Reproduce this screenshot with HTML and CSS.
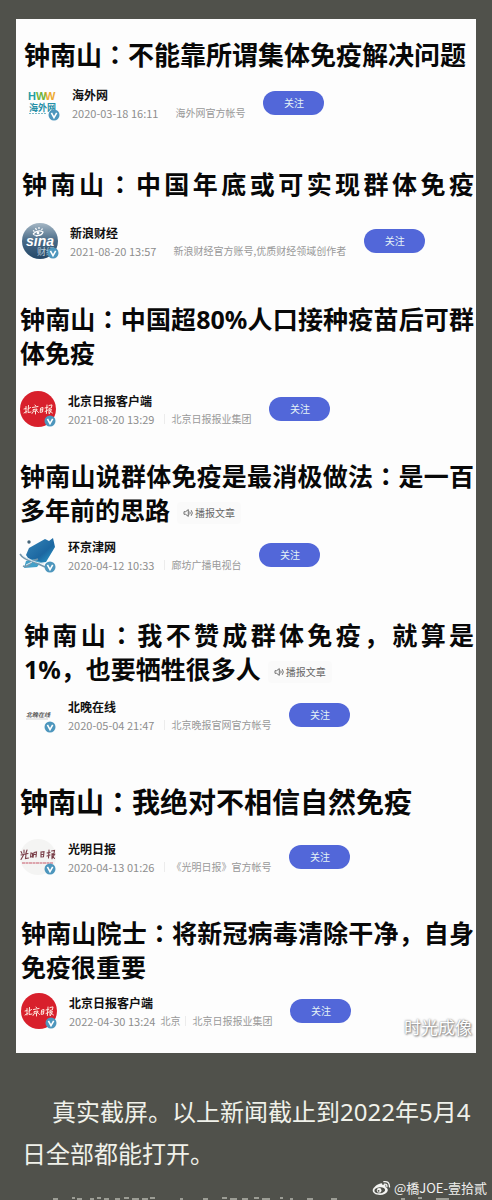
FILE: index.html
```html
<!DOCTYPE html>
<html lang="zh-CN">
<head>
<meta charset="utf-8">
<meta name="viewport" content="width=device-width, initial-scale=1">
<title>钟南山新闻</title>
<link rel="stylesheet" href="styles.css">
</head>
<body>
<svg width="0" height="0" class="defs" aria-hidden="true">
  <symbol id="verified" viewBox="0 0 12 12">
    <circle cx="6" cy="6" r="5.5" fill="#4d96bd"/>
    <path d="M3.4 3.8 6 8.6 8.7 3.8" fill="none" stroke="#fff" stroke-width="1.6"/>
  </symbol>
  <symbol id="speaker" viewBox="0 0 11 10">
    <path d="M1 3.7h1.6L5.3 1.6v6.8L2.6 6.3H1zM6.7 3.6q1 1.4 0 2.8M8.2 2.2q2.2 2.8 0 5.6" fill="none" stroke="#707070" stroke-width="1"/>
  </symbol>
  <symbol id="beijing" viewBox="0 0 36 36">
    <circle cx="18" cy="18" r="18" fill="#d8202c"/>
    <g fill="none" stroke="#ffe9df" stroke-width="1" stroke-linecap="round">
      <path d="M6 15.500v6.500M4 18l2-.5M4 22l2.500-1.500M8.500 14.500 8 21.500l3-.5M8 18l2.500-1.500"/>
      <path d="M15 14l.8 1M12.500 16.500l5.500-1M13.500 18.500l3.500-.5-.5 2-3 .3zM15.500 20v3M13 21l-1 1.500M17.500 20.500l1 1"/>
      <path d="M21 17l2-.5-.5 4.500-2 .3zM21 19l1.500-.3"/>
      <path d="M27 14l-.6 8.500M25 17l3-.8M25 20.500l3-1.500M29 14.500l3-.6-.6 3-2.400.5v5M29.500 19l2-.5-2 4M29.500 19.500l3 2.500"/>
    </g>
  </symbol>
</svg>
<main class="post">
  <div class="paper">
    <article class="news news--1">
      <h2 class="title title--26">钟南山<span class="colon" lang="zh-TW">：</span>不能靠所谓集体免疫解决问题</h2>
      <div class="byline">
        <svg class="avatar" viewBox="0 0 36 36" role="img" aria-label="海外网">
          <g class="logo-latin"><text x="4" y="15" fill="#269da4">H</text><text x="12" y="15" fill="#70b23d">W</text><text x="21" y="15" fill="#edaa32">W</text></g>
          <text class="logo-cn" x="5" y="26" fill="#278fa7">海外网</text>
          <path d="M5 28.500h18" stroke="#7abac8" stroke-width="1" stroke-dasharray="2 1"/>
          <use href="#verified" x="24" y="24" width="12" height="12"/>
        </svg>
        <div class="info"><strong class="name">海外网</strong><div class="meta"><time>2020-03-18 16:11</time><span class="source">海外网官方帐号</span></div></div>
        <button class="follow" type="button">关注</button>
      </div>
    </article>

    <article class="news news--2">
      <h2 class="title title--spread">钟南山<span class="colon" lang="zh-TW">：</span>中国年底或可实现群体免疫</h2>
      <div class="byline">
        <svg class="avatar" viewBox="0 0 36 36" role="img" aria-label="新浪财经">
          <defs><linearGradient id="sky" x1="0" y1="0" x2="0" y2="1"><stop offset="0" stop-color="#a5b7c5"/><stop offset=".5" stop-color="#476986"/><stop offset="1" stop-color="#244767"/></linearGradient></defs>
          <circle cx="18" cy="18" r="18" fill="url(#sky)"/>
          <path d="M11 11q5-5 10-2-1 3.500-5.500 3.500-3.500 0-4.500-1.500M11 7.500l1.500 1M13.500 5l1 2M17 4v2M20.500 5.500l-1 1.500" fill="none" stroke="#fff" stroke-width="1.200"/>
          <circle cx="16" cy="10" r="1.400" fill="#fff"/>
          <text class="logo-sina" x="4" y="23">sina</text>
          <text class="logo-small" x="15" y="32">财经</text>
          <use href="#verified" x="25" y="24" width="12" height="12"/>
        </svg>
        <div class="info"><strong class="name">新浪财经</strong><div class="meta"><time>2021-08-20 13:57</time><span class="source">新浪财经官方账号,优质财经领域创作者</span></div></div>
        <button class="follow" type="button">关注</button>
      </div>
    </article>

    <article class="news news--3">
      <h2 class="title">钟南山<span class="colon" lang="zh-TW">：</span>中国超80%人口接种疫苗后可群体免疫</h2>
      <div class="byline">
        <svg class="avatar" viewBox="0 0 36 36" role="img" aria-label="北京日报"><use href="#beijing"/><use href="#verified" x="24" y="24" width="12" height="12"/></svg>
        <div class="info"><strong class="name">北京日报客户端</strong><div class="meta"><time>2021-08-20 13:29</time><span class="source source--ruled">北京日报报业集团</span></div></div>
        <button class="follow" type="button">关注</button>
      </div>
    </article>

    <article class="news news--4">
      <h2 class="title">钟南山说群体免疫是最消极做法<span class="colon" lang="zh-TW">：</span>是一百多年前的思路<button class="listen" type="button"><svg class="speaker" aria-hidden="true"><use href="#speaker"/></svg>播报文章</button></h2>
      <div class="byline">
        <svg class="avatar" viewBox="0 0 36 36" role="img" aria-label="环京津网">
          <defs><linearGradient id="book" x1="0" y1="0" x2="1" y2="1"><stop offset="0" stop-color="#3687b9"/><stop offset=".6" stop-color="#1c67a1"/><stop offset="1" stop-color="#2fa4d0"/></linearGradient></defs>
          <path d="M9 11 25 2l4 2 4-3 2 9-9 15-7 1-11-5-2-3z" fill="url(#book)"/>
          <path d="M6 24l8-2 7 3-4 5-13 1z" fill="#43a0c8"/>
          <circle cx="9" cy="5" r="1.700" fill="#476579"/>
          <path d="M0 17q3 5 12 7l13 6M3 29q5 2 9-5l6-2" fill="none" stroke="#7497ad" stroke-width="1.600"/>
          <path d="M2 18q6 6 22 9M6 28l6-3" fill="none" stroke="#dceaf0" stroke-width="1"/>
          <use href="#verified" x="24" y="24" width="12" height="12"/>
        </svg>
        <div class="info"><strong class="name">环京津网</strong><div class="meta"><time>2020-04-12 10:33</time><span class="source source--ruled">廊坊广播电视台</span></div></div>
        <button class="follow" type="button">关注</button>
      </div>
    </article>

    <article class="news news--5">
      <h2 class="title title--indent">钟南山<span class="colon" lang="zh-TW">：</span>我不赞成群体免疫，就算是1%，也要牺牲很多人<button class="listen" type="button"><svg class="speaker" aria-hidden="true"><use href="#speaker"/></svg>播报文章</button></h2>
      <div class="byline">
        <svg class="avatar" viewBox="0 0 36 36" role="img" aria-label="北晚在线"><text class="logo-tiny" x="6" y="20">北晚在线</text><path d="M6 22h22" stroke="#bbb" stroke-width=".6"/><use href="#verified" x="24" y="24" width="12" height="12"/></svg>
        <div class="info"><strong class="name">北晚在线</strong><div class="meta"><time>2020-05-04 21:47</time><span class="source source--ruled">北京晚报官网官方帐号</span></div></div>
        <button class="follow" type="button">关注</button>
      </div>
    </article>

    <article class="news news--6">
      <h2 class="title title--28">钟南山<span class="colon" lang="zh-TW">：</span>我绝对不相信自然免疫</h2>
      <div class="byline">
        <svg class="avatar" viewBox="0 0 36 36" role="img" aria-label="光明日报">
          <circle cx="18" cy="18" r="18" fill="#f4f4f3"/>
          <g fill="none" stroke="#7a3f49" stroke-width="1.100" stroke-linecap="round">
            <path d="M4 11v3M1 12.500l1 2M7 11l-1 3M1 16l7-1.500M3.500 16 1 20.500M6 15.500l-.5 4 3-.5"/>
            <path d="M11 14l-.5 4 2-.5v-3zM14 13.500l2.500-.5-.5 5M14 15.500h2M14 13.500l-1 5"/>
            <path d="M21 13l3-.3-.5 5-2.500.3zM21.500 15.500h2"/>
            <path d="M29 11l-.5 8M27 14l3-.6M27 17l3-1M31.500 12l3-.5-.5 3-2 .3v5M32 16l2.500-.5-2.500 4M32.500 17l2 2.500"/>
          </g>
          <path d="M2 24h31" stroke="#d58b97" stroke-width="1.300" stroke-dasharray="3 .5"/>
          <use href="#verified" x="24" y="24" width="12" height="12"/>
        </svg>
        <div class="info"><strong class="name">光明日报</strong><div class="meta"><time>2020-04-13 01:26</time><span class="source source--ruled">《光明日报》官方帐号</span></div></div>
        <button class="follow" type="button">关注</button>
      </div>
    </article>

    <article class="news news--7">
      <h2 class="title">钟南山院士<span class="colon" lang="zh-TW">：</span>将新冠病毒清除干净，自身免疫很重要</h2>
      <div class="byline">
        <svg class="avatar" viewBox="0 0 36 36" role="img" aria-label="北京日报"><use href="#beijing"/><use href="#verified" x="24" y="24" width="12" height="12"/></svg>
        <div class="info"><strong class="name">北京日报客户端</strong><div class="meta"><time>2022-04-30 13:24</time><span class="place">北京</span><span class="source source--near">北京日报报业集团</span></div></div>
        <button class="follow" type="button">关注</button>
      </div>
    </article>
    <span class="stamp">时光成像</span>
  </div>

  <p class="caption">真实截屏。以上新闻截止到2022年5月4日全部都能打开。</p>
  <svg class="cutoff" viewBox="0 0 492 4" aria-hidden="true">
    <path d="M53 3h5M72 2h3m2 1h5M90 3h4m3-1h4M104 3h5m6 0h5M124 2h5m3 1h7M142 3h6m2-1h5M180 3h3M203 3h5M222 2h5m3 1h7M242 3h6M254 2h5M262 3h8M280 2h3M290 3h3M307 3h6M331 3h6M401 3h4M418 2h4M436 3h13" fill="none" stroke="#b5b6ae" stroke-width="1.500"/>
  </svg>
  <div class="weibo">
    <svg class="weibo-icon" viewBox="0 0 20 18" aria-hidden="true">
      <path fill="#f4f4f2" fill-rule="evenodd" d="M8 4c2-1.200 3.400-.5 2.900 1.400 2.400-.8 4.100 0 3.400 2 5 2.300 1.800 8.400-5.800 8.400C3.600 15.800.5 13.500.7 10.800.9 8.500 4.800 4.900 8 4zM8 7.800c-3.500.3-5.700 2-5.500 3.800s2.900 2.800 6 2.500 5.500-2 5.300-3.800S11.300 7.500 8 7.800z"/>
      <circle cx="7.500" cy="11" r="2.500" fill="#f4f4f2"/><circle cx="6.900" cy="11.500" r="1" fill="#50514b"/>
      <path d="M13 4.500q3-.5 2.700 2.500M12.500 1.800q6-1 6 5.500" fill="none" stroke="#f4f4f2" stroke-width="1.400" stroke-linecap="round"/>
    </svg>
    <span>@橋JOE-壹拾貳</span>
  </div>
</main>
</body>
</html>
```
FILE: styles.css
```css
* {
  box-sizing: border-box;
}

body {
  margin: 0;
  background: #50514b;
  font-family: "Noto Sans CJK SC", sans-serif;
}

.defs {
  position: absolute;
}

.post {
  position: relative;
  height: 100vh;
  overflow: hidden;
  padding: 19px 16px 0;
}

.paper {
  position: relative;
  padding: 19px 2px 24px 4px;
  background: #fdfdfd;
}

.news {
  display: flex;
  flex-direction: column;
}

.news--1 { gap: 13px; padding-left: 4px; }
.news--2 { gap: 22px; padding-left: 2px; margin-top: 46px; }
.news--3 { gap: 21px; margin-top: 43px; }
.news--4 { gap: 10px; margin-top: 32px; }
.news--5 { gap: 11px; margin-top: 45px; }
.news--6 { gap: 20px; margin-top: 52px; }
.news--7 { gap: 9px; padding-left: 1px; margin-top: 41px; }

.title {
  margin: 0;
  color: #080808;
  font-family: "Noto Sans", "Noto Sans CJK SC", sans-serif;
  font-size: 25px;
  font-weight: 700;
  line-height: 34px;
  text-align: justify;
}

.title--26 { font-size: 26px; }
.title--28 { font-size: 28px; }
.title--spread { text-align-last: justify; }
.title--indent { padding-left: 4px; }

.colon {
  font-family: "Noto Sans", "Noto Sans CJK TC", sans-serif;
}

.listen {
  display: inline-flex;
  align-items: center;
  gap: 1px;
  height: 22px;
  margin: 0 0 0 7px;
  padding: 0 6px;
  border: 0;
  border-radius: 4px;
  background: #fafafa;
  color: #666;
  font: 400 10px/22px "Noto Sans CJK SC", sans-serif;
  vertical-align: middle;
}

.speaker {
  width: 11px;
  height: 10px;
}

.byline {
  display: flex;
  align-items: center;
  height: 36px;
}

.avatar {
  flex: none;
  width: 36px;
  height: 36px;
  margin-right: 12px;
  overflow: visible;
}

.logo-latin {
  font: 700 11px "Liberation Sans", sans-serif;
}

.logo-cn {
  font: 700 9px "Noto Sans CJK SC", sans-serif;
}

.logo-sina {
  fill: #fff;
  font: italic 700 14px "Liberation Sans", sans-serif;
}

.logo-small {
  fill: #b9cbd8;
  font: 400 9px "Noto Sans CJK SC", sans-serif;
}

.logo-tiny {
  fill: #555;
  font: italic 700 6px "Noto Sans CJK SC", sans-serif;
}

.info {
  padding-top: 1px;
}

.name {
  display: block;
  color: #111;
  font-size: 12px;
  line-height: 18px;
}

.meta {
  display: flex;
  color: #8d8d8d;
  font-size: 11px;
  line-height: 18px;
  white-space: nowrap;
}

.source,
.place {
  color: #999;
  font-size: 10px;
}

.source {
  margin-left: 17px;
}

.place {
  margin-left: 5px;
}

.source--ruled,
.source--near {
  margin-left: 10px;
  padding-left: 7px;
  background: linear-gradient(#ececec, #ececec) left center / 1px 10px no-repeat;
}

.source--near {
  margin-left: 5px;
}

.follow {
  width: 61px;
  height: 24px;
  margin: 0 0 0 18px;
  padding: 0;
  border: 0;
  border-radius: 12px;
  background: #5267d9;
  color: #e4f2f6;
  font: 400 10px/24px "Noto Sans CJK SC", sans-serif;
}

.stamp {
  position: absolute;
  right: 4px;
  bottom: 14px;
  color: #fff;
  font-size: 17px;
  line-height: 24px;
  text-shadow: 0 0 2px #777, 1px 1px 2px #777;
}

.caption {
  margin: 38px 0 0;
  padding: 0 0 0 6px;
  color: #f0f1ea;
  font-family: "Noto Sans", "Noto Sans CJK SC", sans-serif;
  font-size: 24px;
  line-height: 42px;
  text-indent: 30px;
}

.cutoff {
  position: absolute;
  bottom: 0;
  left: 0;
  width: 100%;
}

.weibo {
  position: absolute;
  right: 5px;
  bottom: 2px;
  display: flex;
  align-items: center;
  gap: 3px;
  color: #efefed;
  font-size: 13px;
  line-height: 20px;
}

.weibo-icon {
  width: 19px;
  height: 17px;
}
```
